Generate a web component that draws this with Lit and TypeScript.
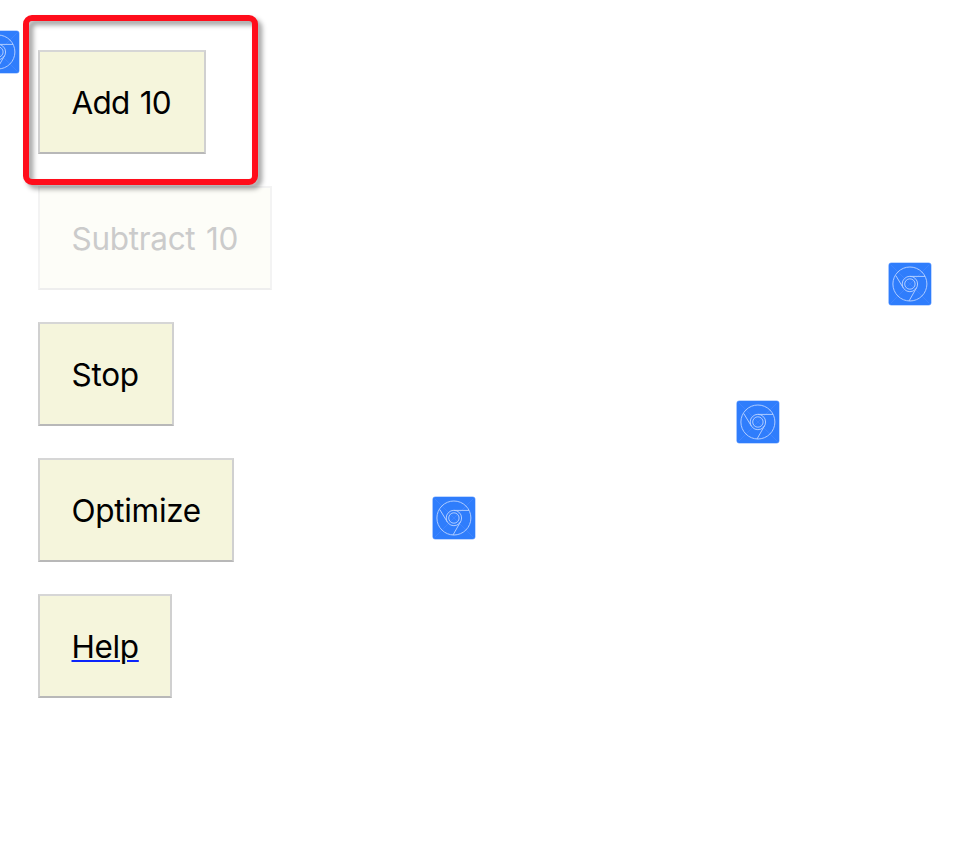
import { LitElement, html, css } from "lit";
import { customElement, property } from "lit/decorators.js";
import { classMap } from "lit/directives/class-map.js";

interface Control {
  label: string;
  width: number;
  spacing: number;
  disabled?: boolean;
  link?: boolean;
}

@customElement("blue-logo")
class BlueLogo extends LitElement {
  static styles = css`
    :host {
      display: block;
      width: 44px;
      height: 44px;
    }
    svg {
      display: block;
    }
    .lines {
      fill: none;
      stroke: #b5d0ff;
      stroke-width: 0.95;
    }
    .guides {
      stroke: #4c8cff;
      stroke-width: 0.6;
    }
  `;

  render() {
    return html`
      <svg width="44" height="44" viewBox="0 0 44 44">
        <rect x="0.4" y="0.5" width="43.1" height="43" rx="3" fill="#84b1ff" />
        <rect x="0.9" y="1" width="42.1" height="42" rx="2.7" fill="#2f7dfc" />
        <path class="guides" d="M3 3L41 41M41 3L3 41" />
        <g class="lines">
          <circle cx="21.9" cy="22" r="17" />
          <circle cx="21.9" cy="22" r="7.7" />
          <circle cx="21.9" cy="22" r="5.2" />
          <path d="M21.9 14.4H37.1M7.8 13.6L15.2 25.8M28.5 25.8L21 39" />
        </g>
      </svg>
    `;
  }
}

@customElement("app-root")
class AppRoot extends LitElement {
  @property({ type: Array })
  controls: Control[] = [
    { label: "Add 10", width: 168, spacing: -0.75 },
    { label: "Subtract 10", width: 234, spacing: -0.3, disabled: true },
    { label: "Stop", width: 136, spacing: -0.25 },
    { label: "Optimize", width: 196, spacing: -0.3 },
    { label: "Help", width: 134, spacing: -0.35, link: true },
  ];

  @property({ type: Array })
  logos = [
    { x: -24, y: 30 },
    { x: 888, y: 262 },
    { x: 736, y: 400 },
    { x: 432, y: 496 },
  ];

  static styles = css`
    :host {
      display: block;
      position: relative;
      height: 866px;
      overflow: hidden;
      background: #fff;
      font-family: Inter, "Liberation Sans", sans-serif;
    }
    .controls {
      display: flex;
      flex-direction: column;
      align-items: flex-start;
      gap: 32px;
      padding: 50px 38px;
    }
    .control {
      box-sizing: border-box;
      height: 104px;
      padding: 2px 0 0 31.5px;
      border: 2px solid #d0d0d0;
      border-top-color: #d6d6d6;
      border-bottom-color: #b8b8b8;
      background: #f5f5dc;
      color: #000;
      font: inherit;
      font-size: 31.5px;
      line-height: 38px;
      text-align: left;
      white-space: nowrap;
      word-spacing: 2px;
    }
    .disabled {
      border-color: #f3f3f3;
      border-bottom-color: #eee;
      background: #fdfdf8;
      color: #cbcbcb;
    }
    .link span {
      text-decoration: underline #0b24fb 2px;
      text-underline-offset: 2px;
    }
    .logo {
      position: absolute;
    }
    .highlight {
      position: absolute;
      left: 23px;
      top: 15px;
      box-sizing: border-box;
      width: 235px;
      height: 170px;
      border: 6px solid #ff0d1b;
      border-radius: 9px;
      filter: drop-shadow(4px 4px 2.5px rgba(0, 0, 0, 0.38));
      pointer-events: none;
    }
  `;

  render() {
    return html`
      <div class="controls">
        ${this.controls.map(
          (c) => html`
            <button
              class=${classMap({ control: true, disabled: !!c.disabled, link: !!c.link })}
              style="width: ${c.width}px; letter-spacing: ${c.spacing}px"
              ?disabled=${c.disabled}
            >
              <span>${c.label}</span>
            </button>
          `
        )}
      </div>
      ${this.logos.map(
        (l) => html`<blue-logo class="logo" style="left: ${l.x}px; top: ${l.y}px"></blue-logo>`
      )}
      <div class="highlight"></div>
    `;
  }
}
